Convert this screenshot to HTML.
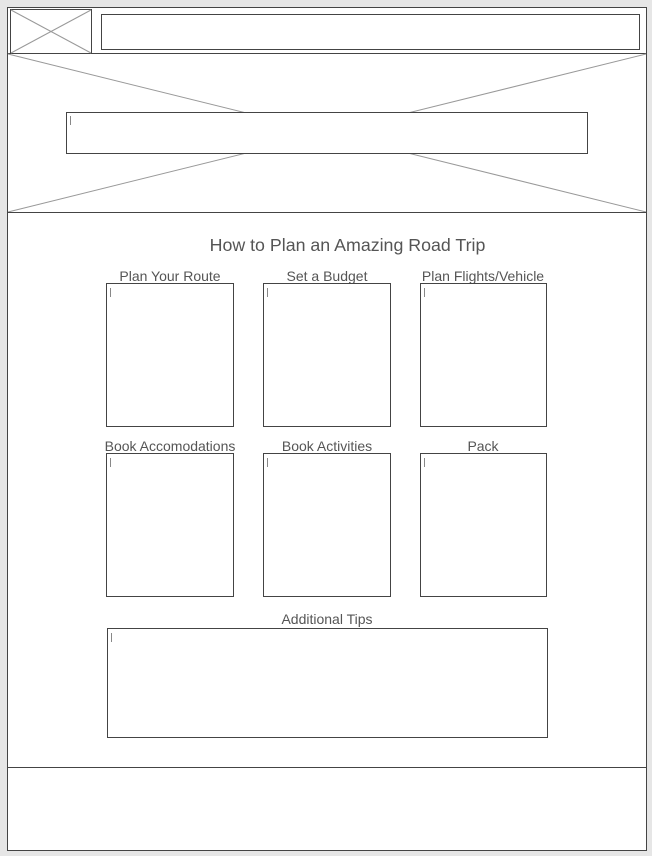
<!DOCTYPE html>
<html><head><meta charset="utf-8"><style>
html,body{margin:0;padding:0;background:#e6e6e6;width:652px;height:856px;overflow:hidden}
svg{display:block}
text{font-family:"Liberation Sans",sans-serif;fill:#555}
</style></head><body>
<svg width="652" height="856" xmlns="http://www.w3.org/2000/svg">
<rect x="7.5" y="7.5" width="639" height="843" fill="#fff" stroke="#444"/>
<line x1="8" y1="53.5" x2="646" y2="53.5" stroke="#444"/>
<rect x="10.5" y="9.5" width="81" height="44" fill="none" stroke="#444"/>
<line x1="11" y1="10" x2="91" y2="53" stroke="#999"/>
<line x1="91" y1="10" x2="11" y2="53" stroke="#999"/>
<rect x="101.5" y="14.5" width="538" height="35" fill="none" stroke="#444"/>
<line x1="8" y1="54" x2="646" y2="212" stroke="#999"/>
<line x1="646" y1="54" x2="8" y2="212" stroke="#999"/>
<line x1="8" y1="212.5" x2="646" y2="212.5" stroke="#444"/>
<rect x="66.5" y="112.5" width="521" height="41" fill="#fff" stroke="#444"/>
<line x1="70.5" y1="116" x2="70.5" y2="125" stroke="#888"/>
<text x="347.5" y="251" font-size="17.8" text-anchor="middle">How to Plan an Amazing Road Trip</text>
<g font-size="14" text-anchor="middle">
<text x="170" y="281">Plan Your Route</text>
<text x="327" y="281">Set a Budget</text>
<text x="483" y="281">Plan Flights/Vehicle</text>
<text x="170" y="451">Book Accomodations</text>
<text x="327" y="451">Book Activities</text>
<text x="483" y="451">Pack</text>
<text x="327" y="624">Additional Tips</text>
</g>
<g fill="none" stroke="#444">
<rect x="106.5" y="283.5" width="127" height="143"/>
<rect x="263.5" y="283.5" width="127" height="143"/>
<rect x="420.5" y="283.5" width="126" height="143"/>
<rect x="106.5" y="453.5" width="127" height="143"/>
<rect x="263.5" y="453.5" width="127" height="143"/>
<rect x="420.5" y="453.5" width="126" height="143"/>
<rect x="107.5" y="628.5" width="440" height="109"/>
</g>
<g stroke="#888">
<line x1="110.5" y1="288" x2="110.5" y2="297"/>
<line x1="267.5" y1="288" x2="267.5" y2="297"/>
<line x1="424.5" y1="288" x2="424.5" y2="297"/>
<line x1="110.5" y1="458" x2="110.5" y2="467"/>
<line x1="267.5" y1="458" x2="267.5" y2="467"/>
<line x1="424.5" y1="458" x2="424.5" y2="467"/>
<line x1="111.5" y1="633" x2="111.5" y2="642"/>
</g>
<line x1="8" y1="767.5" x2="646" y2="767.5" stroke="#444"/>
</svg>
</body></html>
